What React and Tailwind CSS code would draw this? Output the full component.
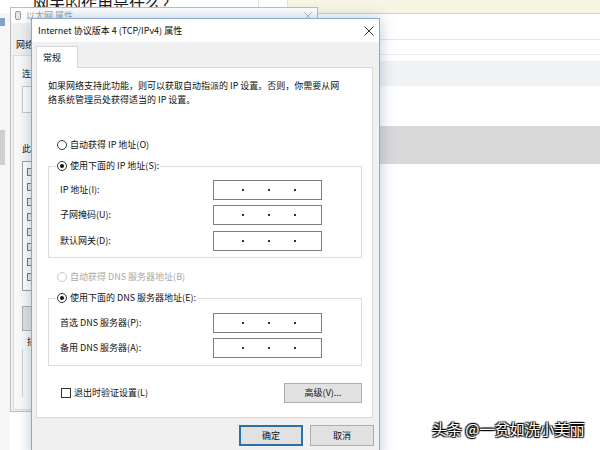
import React from "react";

const FONT = "font-['Noto_Sans_CJK_SC','Noto_Sans',sans-serif]";

function Radio({ checked, disabled }) {
  return (
    <span
      className={`box-border w-[10px] h-[10px] rounded-full border bg-white flex items-center justify-center shrink-0 ${
        disabled ? "border-[#c9c9c9]" : "border-[#333]"
      }`}
    >
      {checked && <span className="w-[4px] h-[4px] rounded-full bg-[#111]" />}
    </span>
  );
}

function IPBox() {
  return (
    <div className="box-border w-[109px] h-[20px] border border-[#7f7f7f] bg-white flex items-center pl-[28px] gap-[24px]">
      <span className="w-[2px] h-[2px] bg-[#333]" />
      <span className="w-[2px] h-[2px] bg-[#333]" />
      <span className="w-[2px] h-[2px] bg-[#333]" />
    </div>
  );
}

function Row({ label, mt }) {
  return (
    <div className={`flex items-center h-[20px] pl-[11px] ${mt}`}>
      <span className="w-[153px]">{label}</span>
      <IPBox />
    </div>
  );
}

function CloseX({ color, size }) {
  return (
    <svg width={size} height={size} viewBox="0 0 10 10" className="shrink-0">
      <path d="M0.5 0.5 L9.5 9.5 M9.5 0.5 L0.5 9.5" stroke={color} strokeWidth="1" fill="none" />
    </svg>
  );
}

export default function App() {
  return (
    <div className={`relative w-[600px] h-[450px] overflow-hidden bg-white text-[9px] leading-[14px] text-[#111] ${FONT}`}>
      {/* top page strip */}
      <div className="absolute left-0 top-0 w-[600px] h-[13px] flex">
        <div className="relative w-[258px] h-[13px] bg-white overflow-hidden">
          <span className="absolute left-[33px] top-[-5px] text-[16px] leading-[16px] text-[#1a1a1a] whitespace-nowrap">
            网关的作用是什么？
          </span>
        </div>
        <div className="w-[30px] h-[13px] bg-white border-l border-r border-[#e2e2e2]" />
        <div className="flex-1 h-[13px] bg-[#f7f5e4]" />
      </div>

      {/* big white window behind, right side */}
      <div className="absolute left-[250px] top-[13px] right-0 bottom-0 bg-white border-t border-[#cfcfcf] flex flex-col">
        <div className="h-[26px] border-b border-[#e6e6e6]" />
        <div className="h-[15px] border-b border-[#ececec]" />
        <div className="h-[6px]" />
        <div className="h-[25px] bg-[#f1f2f4]" />
        <div className="h-[40px]" />
        <div className="h-[38px] bg-[#d9d9d9]" />
        <div className="flex-1" />
      </div>

      {/* far-left strip window */}
      <div className="absolute left-0 top-[13px] w-[10px] h-[437px] bg-[#f6f6f6] flex flex-col">
        <div className="h-[5px]" />
        <div className="w-[5px] h-[8px] bg-[#7fa3c9]" />
        <div className="h-[104px]" />
        <div className="w-[5px] h-[35px] bg-[#cfcfcf]" />
      </div>

      {/* 以太网 属性 window behind */}
      <div className="absolute left-[10px] top-[7px] w-[308px] h-[405px] border border-[#bdbdbd] bg-[#f0f0f0] flex flex-col">
        <div className="h-[15px] bg-white flex items-center pl-[4px] gap-[5px]">
          <span className="w-[6px] h-[9px] rounded-[2px] border border-[#9a9a9a] bg-[#e8e8e8]" />
          <span className="text-[#a5a5a5]">以太网 属性</span>
          <span className="flex-1" />
          <span className="mr-[5px]">
            <CloseX color="#aaa" size={8} />
          </span>
        </div>
        <div className="pl-[5px] pt-[15px] h-[32px]">网络</div>
        <div className="ml-[2px] w-[290px] h-[355px] bg-[#f9f9f9] border border-[#dcdcdc] flex flex-col pl-[8px]">
          <div className="mt-[11px]">连</div>
          <div className="mt-[5px] w-[260px] h-[27px] border border-[#c8c8c8] bg-white" />
          <div className="mt-[29px]">此</div>
          <div className="mt-[5px] w-[260px] h-[130px] border border-[#9c9c9c] bg-white flex flex-col pl-[4px] pt-[6px] gap-[7px]">
            {[0, 1, 2, 3, 4, 5, 6, 7].map((i) => (
              <span key={i} className="w-[6px] h-[8px] border border-[#777] bg-[#eee]" />
            ))}
          </div>
          <div className="mt-[15px] w-[60px] h-[25px] border border-[#adadad] bg-[#e1e1e1]" />
          <div className="mt-[4px] pl-[5px]">描</div>
          <div className="mt-[0px] w-[260px] h-[48px] border-l border-[#cfcfcf]" />
        </div>
      </div>

      {/* main dialog */}
      <div className="absolute left-[31px] top-[18px] w-[349px] h-[440px] border border-[#86abcf] bg-[#f0f0f0] shadow-[0_0_14px_rgba(60,100,150,0.35)] flex flex-col">
        <div className="h-[23px] bg-white flex items-center pl-[6px] pr-[5px]">
          <span>Internet 协议版本 4 (TCP/IPv4) 属性</span>
          <span className="flex-1" />
          <CloseX color="#333" size={10} />
        </div>

        {/* tab */}
        <div className="mt-[4px] ml-[4px] w-[42px] h-[22px] -mb-[1px] relative z-10 border border-b-0 border-[#d9d9d9] bg-white pl-[6px] pt-[4px]">
          常规
        </div>

        {/* panel */}
        <div className="ml-[4px] w-[337px] h-[351px] border border-[#d9d9d9] bg-white flex flex-col">
          <div className="mt-[11px] ml-[11px]">
            如果网络支持此功能，则可以获取自动指派的 IP 设置。否则，你需要从网
            <br />
            络系统管理员处获得适当的 IP 设置。
          </div>

          <div className="mt-[31px] ml-[20px] h-[14px] flex items-center gap-[3px]">
            <Radio />
            <span>自动获得 IP 地址(O)</span>
          </div>

          <fieldset className="mt-[7px] ml-[11px] w-[314px] border border-[#dcdcdc] pb-[6px]">
            <legend className="ml-[7px] px-[1px] h-[14px] flex items-center gap-[3px] bg-white">
              <Radio checked />
              <span>使用下面的 IP 地址(S):</span>
            </legend>
            <Row label="IP 地址(I):" mt="mt-[7px]" />
            <Row label="子网掩码(U):" mt="mt-[5px]" />
            <Row label="默认网关(D):" mt="mt-[6px]" />
          </fieldset>

          <div className="mt-[12px] ml-[20px] h-[14px] flex items-center gap-[3px] text-[#a8a8a8]">
            <Radio disabled />
            <span>自动获得 DNS 服务器地址(B)</span>
          </div>

          <fieldset className="mt-[7px] ml-[11px] w-[314px] border border-[#dcdcdc] pb-[7px]">
            <legend className="ml-[7px] px-[1px] h-[14px] flex items-center gap-[3px] bg-white">
              <Radio checked />
              <span>使用下面的 DNS 服务器地址(E):</span>
            </legend>
            <Row label="首选 DNS 服务器(P):" mt="mt-[8px]" />
            <Row label="备用 DNS 服务器(A):" mt="mt-[5px]" />
          </fieldset>

          <div className="mt-[17px] h-[20px] pl-[24px] pr-[10px] flex items-center">
            <span className="w-[10px] h-[10px] border border-[#333] bg-white shrink-0" />
            <span className="ml-[3px]">退出时验证设置(L)</span>
            <span className="flex-1" />
            <button className="w-[78px] h-[20px] border border-[#adadad] bg-[#e1e1e1] text-[9px] leading-[14px] text-[#111]">
              高级(V)...
            </button>
          </div>
        </div>

        {/* buttons */}
        <div className="mt-[7px] pr-[5px] flex justify-end gap-[7px]">
          <button className="w-[64px] h-[21px] border border-[#2f6fa6] shadow-[inset_0_0_0_1px_#2f6fa6] bg-[#e1e1e1] text-[9px] leading-[14px] text-[#111]">
            确定
          </button>
          <button className="w-[64px] h-[21px] border border-[#adadad] bg-[#e1e1e1] text-[9px] leading-[14px] text-[#111]">
            取消
          </button>
        </div>
      </div>

      {/* watermark */}
      <div className="absolute left-[432px] top-[420px] text-[15px] leading-[18px] text-white whitespace-nowrap [text-shadow:1px_1px_1px_#000,-1px_-1px_1px_#000,1px_-1px_1px_#000,-1px_1px_1px_#000]">
        头条 @一贫如洗小美丽
      </div>
    </div>
  );
}
